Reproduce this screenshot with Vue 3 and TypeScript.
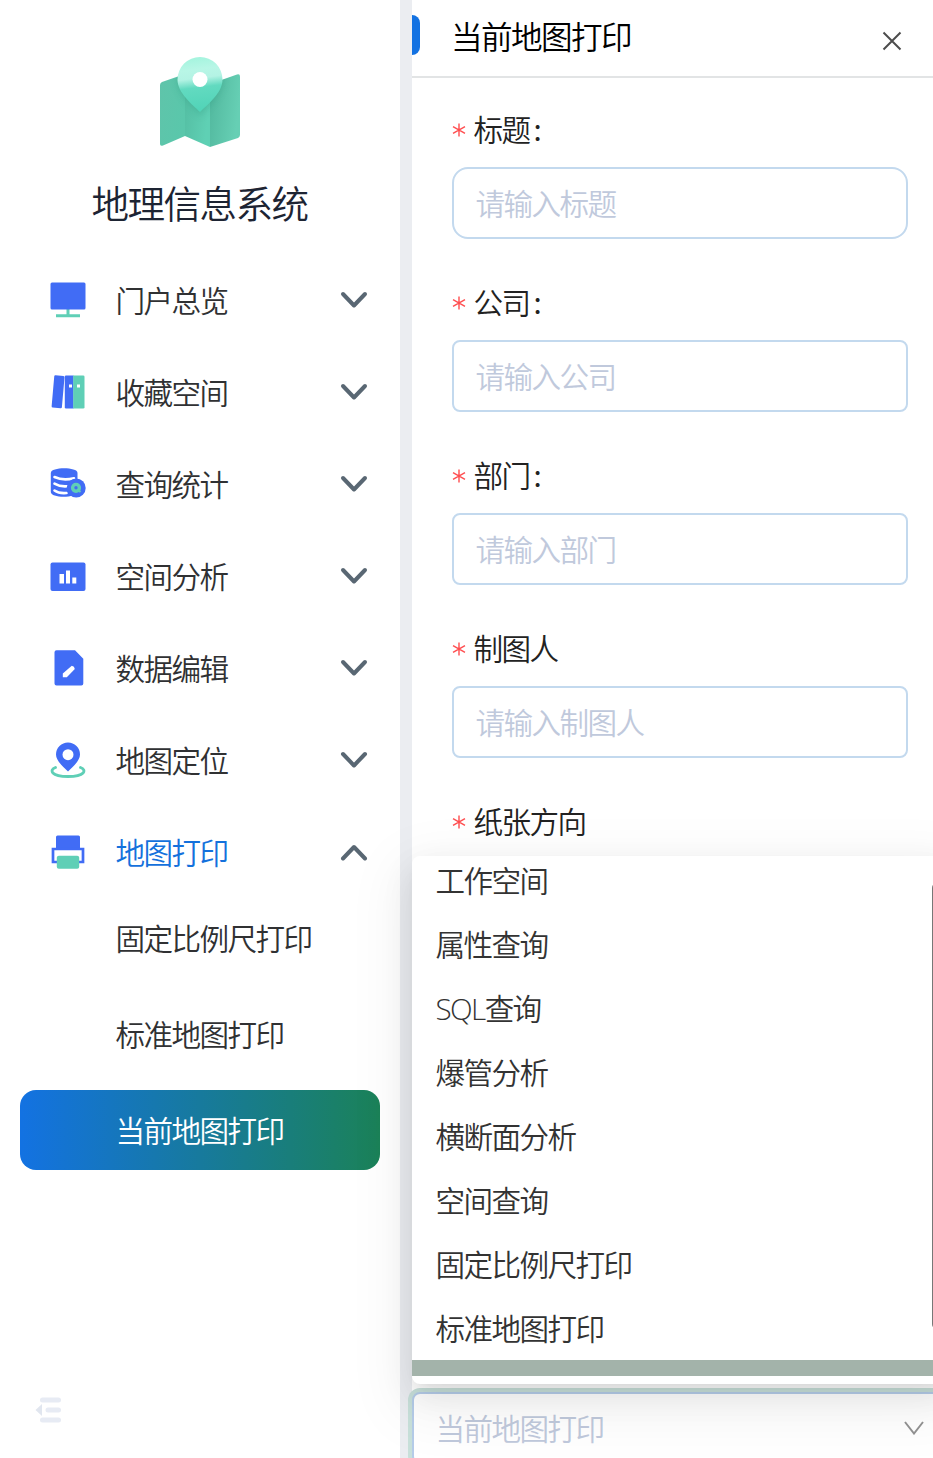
<script setup lang="ts">
interface MenuEntry {
  label: string
  icon: string
  open?: boolean
}

const menu: MenuEntry[] = [
  { label: '门户总览', icon: 'monitor' },
  { label: '收藏空间', icon: 'books' },
  { label: '查询统计', icon: 'database' },
  { label: '空间分析', icon: 'chart' },
  { label: '数据编辑', icon: 'file' },
  { label: '地图定位', icon: 'pin' },
  { label: '地图打印', icon: 'printer', open: true },
]

const children: string[] = ['固定比例尺打印', '标准地图打印', '当前地图打印']
const current = '当前地图打印'

const fields = [
  { label: '标题', colon: true, placeholder: '请输入标题' },
  { label: '公司', colon: true, placeholder: '请输入公司' },
  { label: '部门', colon: true, placeholder: '请输入部门' },
  { label: '制图人', colon: false, placeholder: '请输入制图人' },
]

const options: string[] = [
  '工作空间', '属性查询', 'SQL查询', '爆管分析',
  '横断面分析', '空间查询', '固定比例尺打印', '标准地图打印',
]
</script>

<template>
  <div class="page">
    <aside class="sidebar">
      <svg class="logo" viewBox="0 0 80 92" width="80" height="92">
        <defs>
          <linearGradient id="fold" x1="0" y1="0" x2="1" y2="0.5">
            <stop offset="0" stop-color="#5fc4aa" /><stop offset="1" stop-color="#5ac7ab" />
          </linearGradient>
          <linearGradient id="foldMid" x1="0" y1="0" x2="1" y2="0.4">
            <stop offset="0" stop-color="#53bca1" /><stop offset="1" stop-color="#5fd0b4" />
          </linearGradient>
          <linearGradient id="foldRight" x1="0" y1="0" x2="1" y2="0.3">
            <stop offset="0" stop-color="#51b79d" /><stop offset="1" stop-color="#66cfb4" />
          </linearGradient>
          <linearGradient id="drop" x1="0.45" y1="0" x2="0.55" y2="1">
            <stop offset="0" stop-color="#a4f4de" /><stop offset="0.22" stop-color="#b8f6e6" />
            <stop offset="0.38" stop-color="#b4f3e4" />
            <stop offset="0.55" stop-color="#62dac0" /><stop offset="1" stop-color="#50d3b7" />
          </linearGradient>
          <filter id="soft" x="-50%" y="-50%" width="200%" height="200%"><feGaussianBlur stdDeviation="3.5" /></filter>
          <clipPath id="mapClip"><path d="M0 27 25 19 50 28 80 18V84L50 91 25 80 0 90Z" /></clipPath>
        </defs>
        <path d="M0 29Q0 27 2 26L25 18V80L3 89.5Q0 90.500 0 88Z" fill="url(#fold)" />
        <path d="M25 18 50 28V91L25 80Z" fill="url(#foldMid)" />
        <path d="M50 28 77 18.500Q80 17.500 80 20.500V79Q80 81 78 82L50 91Z" fill="url(#foldRight)" />
        <g clip-path="url(#mapClip)">
          <path d="M40 60C34 51 17 38 17 24a23 23 0 0 1 46 0C63 38 47 51 40 60Z" fill="#2f987f" opacity=".35" filter="url(#soft)" />
        </g>
        <path d="M40 56C32 48 17.500 37 17.500 23.500a22.500 22.500 0 0 1 45 0C62.500 37 48 48 40 56Z" fill="url(#drop)" />
        <circle cx="40" cy="23.500" r="7.500" fill="#fff" />
      </svg>
      <h1 class="brand">地理信息系统</h1>

      <nav class="menu">
        <div v-for="m in menu" :key="m.label" class="menu-row" :class="{ open: m.open }">
          <svg class="menu-icon" viewBox="0 0 36 36" width="36" height="36">
            <g v-if="m.icon === 'monitor'">
              <path d="M16.500 27h3v5.500h-3zM6 32.200h24v3H6z" fill="#5fcfb6" />
              <rect x=".5" y=".5" width="35" height="27" rx="1.500" fill="#416cf5" />
            </g>
            <g v-else-if="m.icon === 'books'">
              <rect x="2.900" y="1.500" width="10.300" height="32.500" rx="1.200" fill="#416cf5" transform="rotate(5 8 18)" />
              <path d="M16 1.500h7.500v33H16q-1.200 0-1.200-1.200V2.700Q14.800 1.500 16 1.500Z" fill="#416cf5" />
              <path d="M23.200 1.500h10q1.300 0 1.300 1.200v30.600q0 1.200-1.300 1.200h-10z" fill="#5fcfb6" />
              <path d="M19 10.500h3v3h-3zM27 10.500h3v3h-3z" fill="#fff" />
            </g>
            <g v-else-if="m.icon === 'database'">
              <path d="M.8 7C.8.8 27.500.8 27.500 7V25C27.500 32.500.8 32.500.8 26Z" fill="#416cf5" />
              <path d="M4.500 11Q13 15 24 12.200M4.500 17.700Q10 21 17.500 20.300M4.500 24.500Q9 27.700 16.500 27" fill="none" stroke="#fff" stroke-width="2.600" stroke-linecap="round" />
              <circle cx="26.200" cy="22" r="9.500" fill="#416cf5" />
              <circle cx="26" cy="21.800" r="3.400" fill="none" stroke="#5fcfb6" stroke-width="3.400" />
              <path d="M27.500 23.500 30.500 26" stroke="#5fcfb6" stroke-width="2.200" />
            </g>
            <g v-else-if="m.icon === 'chart'">
              <rect x=".5" y="4.500" width="35" height="28.500" rx="2" fill="#416cf5" />
              <path d="M9.500 16H14v9.500H9.500zM16 12.500h4v13h-4zM22.300 19.500h4v6h-4z" fill="#fff" />
            </g>
            <g v-else-if="m.icon === 'file'">
              <path d="M6.500.3H25L33.300 8.700V33.500q0 2-2 2H6.500q-2 0-2-2V2.300q0-2 2-2Z" fill="#416cf5" />
              <path d="M12.800 27.300V23.500L21.800 15.700Q24.500 16.200 24.800 19L16.800 27.300Z" fill="#fff" />
            </g>
            <g v-else-if="m.icon === 'pin'">
              <path d="M5.500 25.500C-1 28 1 34.500 18 34.500S37 28 30.500 25.500" fill="none" stroke="#5fcfb6" stroke-width="2.800" stroke-linecap="round" />
              <path d="M18 29.500C14 25.500 6 19 6 12.500a12 12 0 0 1 24 0C30 19 22 25.500 18 29.500Z" fill="#416cf5" />
              <circle cx="18" cy="12.700" r="5.500" fill="#fff" />
            </g>
            <g v-else>
              <rect x="6" y="1.500" width="24" height="14" rx="1.500" fill="#416cf5" />
              <path d="M8 28H3V15H33V28H28" fill="none" stroke="#416cf5" stroke-width="2.700" />
              <rect x="6.800" y="21.800" width="22.400" height="13" rx="2" fill="#5fcfb6" />
            </g>
          </svg>
          <span class="menu-label">{{ m.label }}</span>
          <svg class="chevron" viewBox="0 0 28 18" width="28" height="18">
            <path :d="m.open ? 'M3 15.500 14 4 25 15.500' : 'M3 3 14 14.500 25 3'" />
          </svg>
        </div>
        <div v-for="c in children" :key="c" class="sub-row" :class="{ active: c === current }">{{ c }}</div>
      </nav>

      <svg class="collapse" viewBox="0 0 26 26" width="26" height="26">
        <path d="M7.500 3H23.500M13 13H23.500M7.500 23H23.500" />
        <path class="arrow" d="M.5 13 7 7V19Z" />
      </svg>
    </aside>

    <main class="panel">
      <header class="panel-head">
        <span class="marker"></span>
        <h2>{{ current }}</h2>
        <svg class="close" viewBox="0 0 20 20" width="20" height="20"><path d="M1.500 1.500 18.500 18.500M18.500 1.500 1.500 18.500" /></svg>
      </header>

      <form class="form">
        <div v-for="(f, i) in fields" :key="f.label" class="field">
          <label>
            <svg class="star" viewBox="0 0 14 14" width="14" height="14"><path d="M7 .5V13.500M1 3.700 13 10.300M13 3.700 1 10.300" /></svg>
            <span>{{ f.label }}</span><b v-if="f.colon">:</b>
          </label>
          <div class="input" :class="{ round: i === 0 }">{{ f.placeholder }}</div>
        </div>
        <div class="field">
          <label>
            <svg class="star" viewBox="0 0 14 14" width="14" height="14"><path d="M7 .5V13.500M1 3.700 13 10.300M13 3.700 1 10.300" /></svg>
            <span>纸张方向</span>
          </label>
        </div>
      </form>

      <div class="select">
        <span>{{ current }}</span>
        <svg viewBox="0 0 20 14" width="20" height="14"><path d="M1 1 10 12.500 19 1" /></svg>
      </div>

      <div class="dropdown">
        <ul>
          <li v-for="o in options" :key="o">{{ o }}</li>
          <li class="selected"></li>
        </ul>
        <span class="thumb"></span>
      </div>
    </main>
  </div>
</template>

<style>
html, body { margin: 0; overflow: hidden; }
</style>

<style scoped>
* { box-sizing: border-box; }
.page {
  display: flex;
  width: 933px;
  height: 1458px;
  overflow: hidden;
  background: #ebedf1;
  font-family: "Noto Sans CJK SC", sans-serif;
  font-weight: 350;
  font-size: 29.6px;
  letter-spacing: -1.6px;
  color: #303133;
  white-space: nowrap;
}
.sidebar {
  position: relative;
  width: 400px;
  margin-right: 12px;
  flex: none;
  background: #fff;
  display: flex;
  flex-direction: column;
}
.logo { margin: 56px auto 0; display: block; }
.brand {
  margin: 26px 0 0;
  height: 56px;
  line-height: 56px;
  text-align: center;
  font-size: 37.6px;
  font-weight: 350;
  padding-right: 1px;
  color: #1d2433;
}
.menu { margin-top: 24px; }
.menu-row {
  display: flex;
  align-items: center;
  height: 92px;
  padding: 0 32px 0 50px;
}
.menu-label { margin-left: 29.5px; flex: 1; line-height: 42px; padding-bottom: 1px; }
.open .menu-label { color: #1471dc; }
.chevron { fill: none; stroke: #596773; stroke-width: 4; stroke-linecap: round; stroke-linejoin: round; }
.sub-row {
  height: 80px;
  line-height: 80px;
  margin: 0 20px 16px;
  padding-left: 95.5px;
  border-radius: 16px;
}
.sub-row.active { background: linear-gradient(90deg, #1372e2, #1b8258); color: #fff; }
.collapse {
  margin: auto 0 35px 35px;
  fill: none;
  stroke: #e7ebf4;
  stroke-width: 5;
  stroke-linecap: round;
}
.collapse .arrow { fill: #e1e6ef; stroke: none; }
.panel { width: 521px; flex: none; background: #fff; position: relative; }
.panel-head {
  height: 78px;
  border-bottom: 2px solid #e2e4e5;
  display: flex;
  align-items: center;
}
.marker { width: 8px; height: 40px; margin-top: -6px; border-radius: 0 8px 8px 0; background: #1372e2; }
.panel-head h2 {
  margin: -7px 0 0 31px;
  flex: 1;
  font-weight: 350;
  font-size: 31.6px;
  line-height: 44px;
  color: #000;
}
.close { margin: 5px 31px 0 0; fill: none; stroke: #4c4c4c; stroke-width: 2; }
.form { padding: 23px 25px 0 40px; }
.field { height: 173px; }
.field label { display: flex; align-items: center; height: 60px; padding-bottom: 5px; line-height: 42px; color: #222; }
.star { fill: none; stroke: #ff4d4f; stroke-width: 1.4; margin-right: 7.5px; margin-top: 2px; }
.field b { font-weight: 400; margin-left: 4px; }
.input {
  margin-top: 6px;
  height: 72px;
  line-height: 67px;
  border: 2px solid #c3d9ee;
  border-radius: 8px;
  padding-left: 21.5px;
  color: #c0c9dc;
}
.input.round { border-radius: 16px; }
.select {
  position: absolute;
  left: 0;
  top: 1392px;
  width: 540px;
  height: 72px;
  border: 2px solid #b5cce9;
  border-radius: 8px;
  box-shadow: 0 0 0 4px #c8e0da;
  background: #fff;
  line-height: 66px;
  padding-left: 21.5px;
  display: flex;
  align-items: center;
  color: #c0c9dc;
}
.select span { padding-bottom: 1px; }
.select svg { margin-left: auto; margin-right: 26px; fill: none; stroke: #929292; stroke-width: 2; }
.dropdown {
  position: absolute;
  left: 0;
  top: 856px;
  width: 540px;
  height: 528px;
  padding: 8px 0;
  border-radius: 8px;
  background: #fff;
  box-shadow: 0 12px 32px rgba(0, 0, 0, .08), 0 6px 12px -8px rgba(0, 0, 0, .12), 0 18px 56px 16px rgba(0, 0, 0, .05);
}
.dropdown ul { list-style: none; margin: 0; padding: 0; height: 512px; }
.dropdown li {
  height: 64px;
  line-height: 64px;
  padding: 1px 0 0 23.5px;
  font-family: "Open Sans", "Noto Sans CJK SC", sans-serif;
  color: #333;
}
.dropdown li:first-child { height: 48px; line-height: 32px; }
.dropdown .selected { height: 16px; background: #a3b3aa; }
.thumb { position: absolute; left: 520px; top: 26px; width: 12px; height: 448px; border-radius: 6px; background: #777; }
</style>
